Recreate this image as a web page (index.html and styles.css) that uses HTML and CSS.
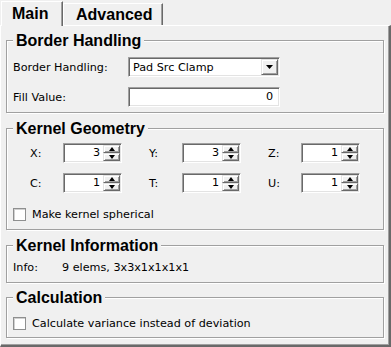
FILE: index.html
```html
<!DOCTYPE html>
<html lang="en">
<head>
    <meta charset="UTF-8">
    <title>Kernel Settings</title>
    <link rel="stylesheet" href="styles.css">
</head>
<body>
    <div class="tabbar">
        <div class="tab active">Main</div>
        <div class="tab">Advanced</div>
    </div>
    <div class="pane">
        <fieldset class="group bh">
            <legend>Border Handling</legend>
            <div class="form">
                <span>Border Handling:</span>
                <div class="combo">
                    <span class="combo-text">Pad Src Clamp</span>
                    <span class="drop"><svg width="7" height="4" viewBox="0 0 7 4"><path d="M0 0H7L3.5 4Z" fill="#000"/></svg></span>
                </div>
                <span>Fill Value:</span>
                <div class="field">0</div>
            </div>
        </fieldset>

        <fieldset class="group kg">
            <legend>Kernel Geometry</legend>
            <div class="kgrid">
                <div class="cell"><span class="lbl">X:</span><div class="spin"><span class="val">3</span><span class="btns"><span class="up"></span><span class="down"></span></span></div></div>
                <div class="cell"><span class="lbl">Y:</span><div class="spin"><span class="val">3</span><span class="btns"><span class="up"></span><span class="down"></span></span></div></div>
                <div class="cell"><span class="lbl">Z:</span><div class="spin"><span class="val">1</span><span class="btns"><span class="up"></span><span class="down"></span></span></div></div>
                <div class="cell"><span class="lbl">C:</span><div class="spin"><span class="val">1</span><span class="btns"><span class="up"></span><span class="down"></span></span></div></div>
                <div class="cell"><span class="lbl">T:</span><div class="spin"><span class="val">1</span><span class="btns"><span class="up"></span><span class="down"></span></span></div></div>
                <div class="cell"><span class="lbl">U:</span><div class="spin"><span class="val">1</span><span class="btns"><span class="up"></span><span class="down"></span></span></div></div>
            </div>
            <div class="check"><span class="box"></span>Make kernel spherical</div>
        </fieldset>

        <fieldset class="group ki">
            <legend>Kernel Information</legend>
            <div class="info"><span class="info-lbl">Info:</span><span>9 elems, 3x3x1x1x1x1</span></div>
        </fieldset>

        <fieldset class="group calc">
            <legend>Calculation</legend>
            <div class="check"><span class="box"></span>Calculate variance instead of deviation</div>
        </fieldset>
    </div>
</body>
</html>
```

FILE: styles.css
```css
body {
    margin: 0;
    width: 391px;
    height: 347px;
    overflow: hidden;
    background: #f0f0f0;
    font-family: 'DejaVu Sans', sans-serif;
    font-size: 11.2px;
    color: #000;
}
.tabbar {
    display: flex;
    align-items: flex-end;
    height: 25px;
    padding-left: 1px;
    position: relative;
    z-index: 1;
}
.tab {
    box-sizing: border-box;
    height: 22px;
    width: 100px;
    padding: 2px 0 0 12px;
    font-family: 'Liberation Sans', Arial, sans-serif;
    font-weight: bold;
    font-size: 16px;
    line-height: 18px;
    background: #f0f0f0;
    border-left: 1px solid #fff;
    border-top: 1px solid #fff;
    border-right: 1px solid #696969;
    box-shadow: inset -1px 0 0 #a0a0a0;
}
.tab.active {
    height: 25px;
    width: 62px;
    margin-bottom: -1px;
    padding: 3px 0 0 10px;
}
.pane {
    box-sizing: border-box;
    height: 322px;
    padding: 6px 5px 0 5px;
    border-top: 1px solid #fff;
    border-left: 1px solid #fff;
    border-right: 2px solid #696969;
    border-bottom: 2px solid #696969;
    box-shadow: inset -1px -1px 0 #a0a0a0;
}
.group {
    margin: 7px 0 0 0;
    padding: 0 6px;
    border: 1px solid #a0a0a0;
    box-shadow: inset 1px 1px 0 #fff, 1px 1px 0 #fff;
}
.group:first-child {
    margin-top: 0;
}
.group legend {
    padding: 0 3px;
    font-family: 'Liberation Sans', Arial, sans-serif;
    font-weight: bold;
    font-size: 16px;
    line-height: 17px;
    background: #f0f0f0;
}
.bh {
    padding-top: 8px;
    padding-bottom: 5px;
}
.kg {
    padding-top: 6px;
    padding-bottom: 8px;
}
.ki {
    padding-top: 7px;
    padding-bottom: 7px;
}
.calc {
    margin-top: 6px;
    padding-top: 10px;
    padding-bottom: 7px;
}
.form {
    display: grid;
    grid-template-columns: 115px 152px;
    grid-auto-rows: 20px;
    row-gap: 10px;
    align-items: center;
}
.combo, .field, .spin {
    box-sizing: border-box;
    height: 20px;
    background: #fff;
    border-top: 1px solid #a0a0a0;
    border-left: 1px solid #a0a0a0;
    border-right: 1px solid #fff;
    border-bottom: 1px solid #fff;
    box-shadow: inset 1px 1px 0 #696969, inset -1px -1px 0 #e3e3e3;
}
.combo {
    display: flex;
    align-items: center;
    padding: 0 1px 0 4px;
}
.combo-text {
    flex: 1;
}
.drop, .btns span {
    box-sizing: border-box;
    display: flex;
    align-items: center;
    justify-content: center;
    background: #f0f0f0;
    border-top: 1px solid #e3e3e3;
    border-left: 1px solid #e3e3e3;
    border-right: 1px solid #696969;
    border-bottom: 1px solid #696969;
    box-shadow: inset 1px 1px 0 #fff, inset -1px -1px 0 #a0a0a0;
}
.drop {
    width: 17px;
    height: 16px;
}
.field {
    padding: 0 6px;
    text-align: right;
    line-height: 18px;
}
.kgrid {
    display: grid;
    grid-template-columns: repeat(3, 92px);
    column-gap: 27px;
    row-gap: 10px;
    padding-left: 17px;
}
.cell {
    display: flex;
    align-items: center;
}
.lbl {
    width: 33px;
}
.spin {
    display: flex;
    width: 59px;
    padding: 1px 1px 1px 2px;
}
.val {
    flex: 1;
    text-align: right;
    padding-right: 3px;
    line-height: 16px;
}
.btns {
    display: flex;
    flex-direction: column;
    width: 17px;
}
.btns span {
    height: 8px;
    flex: 1;
}
.up::before {
    content: '';
    border-left: 3.5px solid transparent;
    border-right: 3.5px solid transparent;
    border-bottom: 4px solid #000;
}
.down::before {
    content: '';
    border-left: 3.5px solid transparent;
    border-right: 3.5px solid transparent;
    border-top: 4px solid #000;
}
.check {
    display: flex;
    align-items: center;
    gap: 6px;
    height: 14px;
}
.kg .check {
    margin-top: 14px;
}
.box {
    box-sizing: border-box;
    width: 13px;
    height: 13px;
    background: #fff;
    border: 1px solid #8e8f8f;
    box-shadow: inset 1px 1px 0 #d0d0d0;
}
.info {
    display: flex;
    height: 14px;
    line-height: 14px;
}
.info-lbl {
    width: 49px;
}
```
